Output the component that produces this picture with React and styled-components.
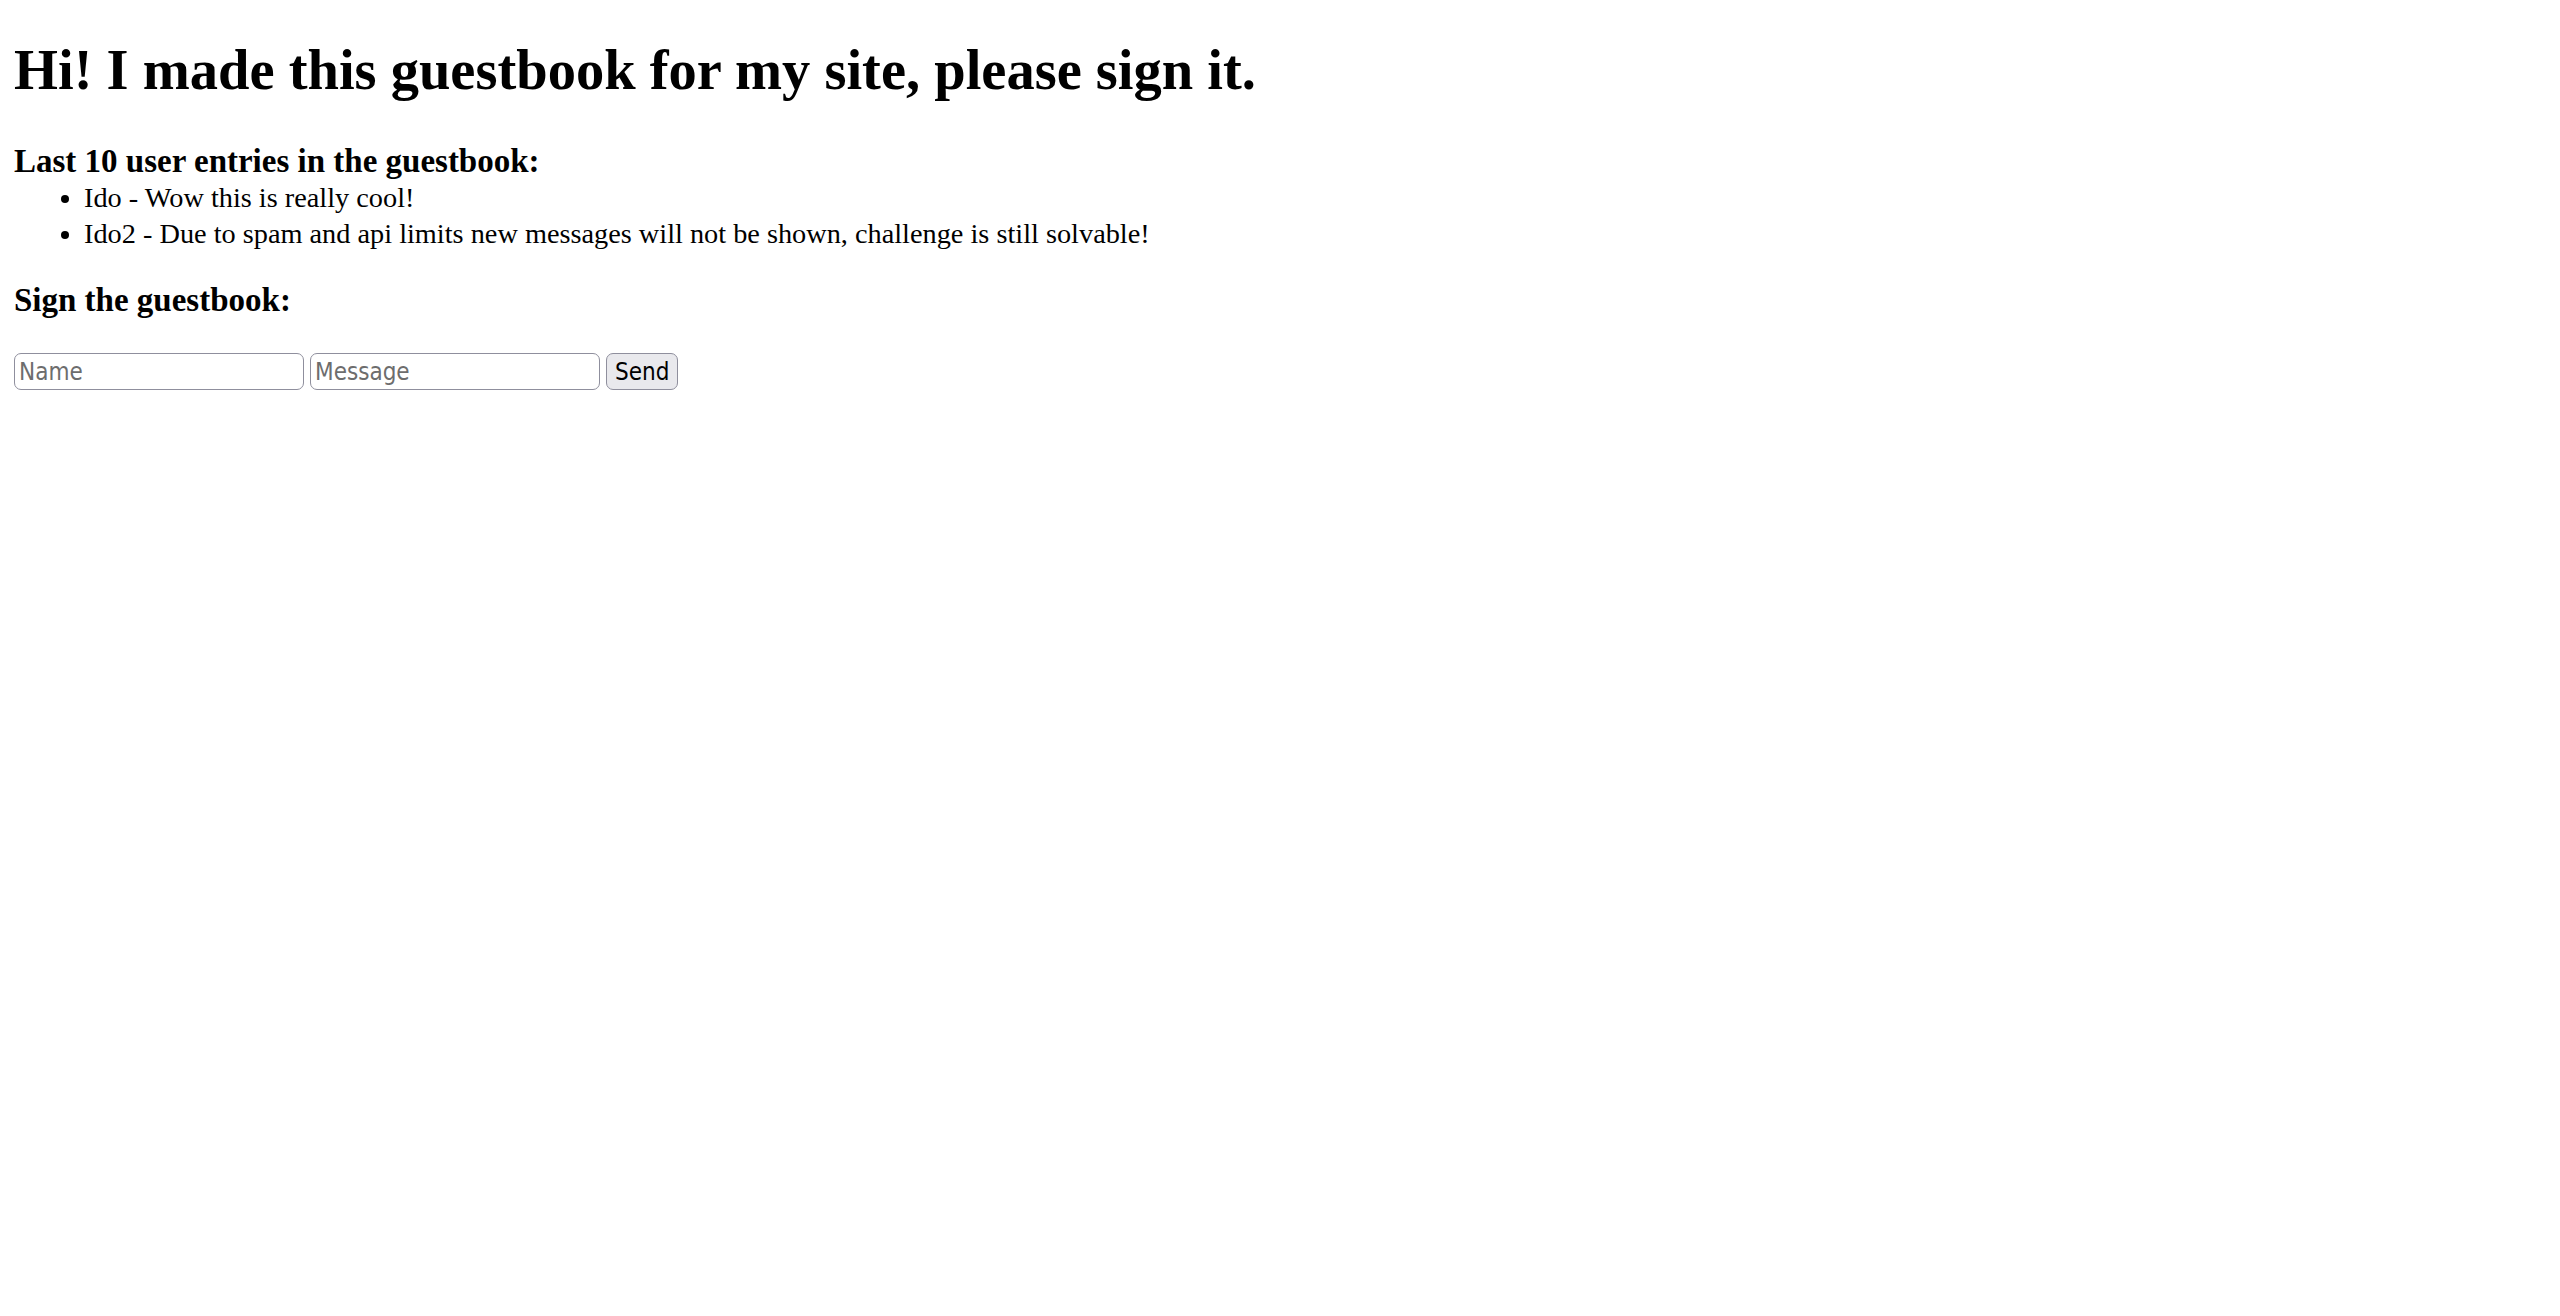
import styled, { createGlobalStyle } from "styled-components";

const GlobalStyle = createGlobalStyle`
    body {
        margin: 14px;
        background: #fff;
        color: #000;
        font-family: "Liberation Serif", "Times New Roman", serif;
        font-size: 28.3px;
    }
`;

const Title = styled.h1`
    font-size: 56.5px;
    font-weight: bold;
    margin: 24px 0 41px;
    line-height: normal;
`;

const Heading = styled.h3`
    font-size: 33px;
    font-weight: bold;
    margin: ${({ $tight }) => ($tight ? "0" : "31px 0 34px")};
`;

const EntryList = styled.ul`
    margin: 0;
    padding-left: 70px;
    list-style: disc;
`;

const Entry = styled.li`
    line-height: 35.5px;
`;

const Form = styled.form`
    display: flex;
    align-items: center;
    gap: 6px;
`;

const TextInput = styled.input`
    box-sizing: border-box;
    width: 290px;
    height: 37px;
    padding: 2px 4px;
    border: 1px solid #8f8f9d;
    border-radius: 7px;
    background: #fff;
    font-family: "DejaVu Sans Condensed", "DejaVu Sans", sans-serif;
    font-size: 24px;
    color: #000;

    &::placeholder {
        color: #6d6d6d;
    }
`;

const SendButton = styled.button`
    box-sizing: border-box;
    height: 37px;
    padding: 0 8px;
    border: 1px solid #8f8f9d;
    border-radius: 7px;
    background: #e9e9ed;
    font-family: "DejaVu Sans Condensed", "DejaVu Sans", sans-serif;
    font-size: 24px;
    color: #000;
`;

const entries = [
    { name: "Ido", text: "Wow this is really cool!" },
    {
        name: "Ido2",
        text: "Due to spam and api limits new messages will not be shown, challenge is still solvable!",
    },
];

export default function App() {
    return (
        <>
            <GlobalStyle />
            <Title>Hi! I made this guestbook for my site, please sign it.</Title>
            <Heading $tight>Last 10 user entries in the guestbook:</Heading>
            <EntryList>
                {entries.map((e) => (
                    <Entry key={e.name}>
                        {e.name} - {e.text}
                    </Entry>
                ))}
            </EntryList>
            <Heading>Sign the guestbook:</Heading>
            <Form onSubmit={(ev) => ev.preventDefault()}>
                <TextInput placeholder="Name" />
                <TextInput placeholder="Message" />
                <SendButton type="submit">Send</SendButton>
            </Form>
        </>
    );
}
